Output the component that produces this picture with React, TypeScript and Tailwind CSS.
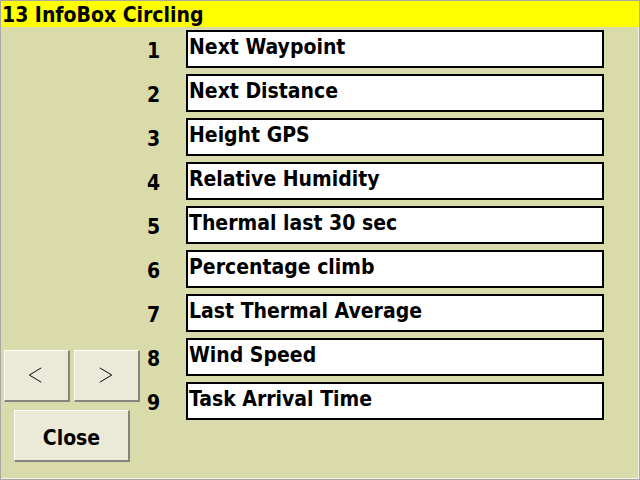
import React from "react";

const items = [
  "Next Waypoint",
  "Next Distance",
  "Height GPS",
  "Relative Humidity",
  "Thermal last 30 sec",
  "Percentage climb",
  "Last Thermal Average",
  "Wind Speed",
  "Task Arrival Time",
];

function Btn({ className, children }: { className: string; children: React.ReactNode }) {
  return (
    <div
      className={
        "flex items-center justify-center bg-[#ebe9d8] border-t border-l border-t-[#fdfdf8] border-l-[#fdfdf8] border-r-2 border-b-2 border-r-[#858580] border-b-[#858580] " +
        className
      }
    >
      {children}
    </div>
  );
}

export default function App() {
  return (
    <div className="w-[640px] h-[480px] box-border border border-[#a8a8a0] shadow-[inset_-1px_-1px_0_#f2f2e8] bg-[#dadbab] font-['DejaVu_Sans_Condensed','DejaVu_Sans',sans-serif] font-bold text-[21px] text-black flex flex-col overflow-hidden">
      <div className="h-[26px] shrink-0 bg-[#ffff00] leading-[23px] pt-[3px] pl-[1px] whitespace-nowrap">
        13 InfoBox Circling
      </div>
      <div className="flex flex-row flex-1">
        <div className="w-[139px] shrink-0 flex flex-col justify-end pl-[3px] pb-[17px]">
          <div className="flex flex-row gap-[4px]">
            <Btn className="w-[66px] h-[52px]">
              <svg width="66" height="52" viewBox="0 0 66 52" className="block">
                <polyline points="38,17.5 25.5,25 38,32.5" fill="none" stroke="#000" strokeWidth="1" />
              </svg>
            </Btn>
            <Btn className="w-[66px] h-[52px]">
              <svg width="66" height="52" viewBox="0 0 66 52" className="block">
                <polyline points="26,17.5 38.5,25 26,32.5" fill="none" stroke="#000" strokeWidth="1" />
              </svg>
            </Btn>
          </div>
          <Btn className="w-[116px] h-[52px] ml-[10px] mt-[8px] leading-[24px] pt-[4px]">Close</Btn>
        </div>
        <div className="flex flex-col gap-[6px] pt-[3px]">
          {items.map((t, i) => (
            <div key={t} className="flex flex-row h-[38px]">
              <div className="w-[46px] shrink-0 pl-[7px] pt-[9px] leading-[24px]">{i + 1}</div>
              <div className="w-[418px] h-[38px] box-border border-2 border-black bg-white pl-[1px] pt-[3px] leading-[24px] whitespace-nowrap overflow-hidden">
                {t}
              </div>
            </div>
          ))}
        </div>
      </div>
    </div>
  );
}
